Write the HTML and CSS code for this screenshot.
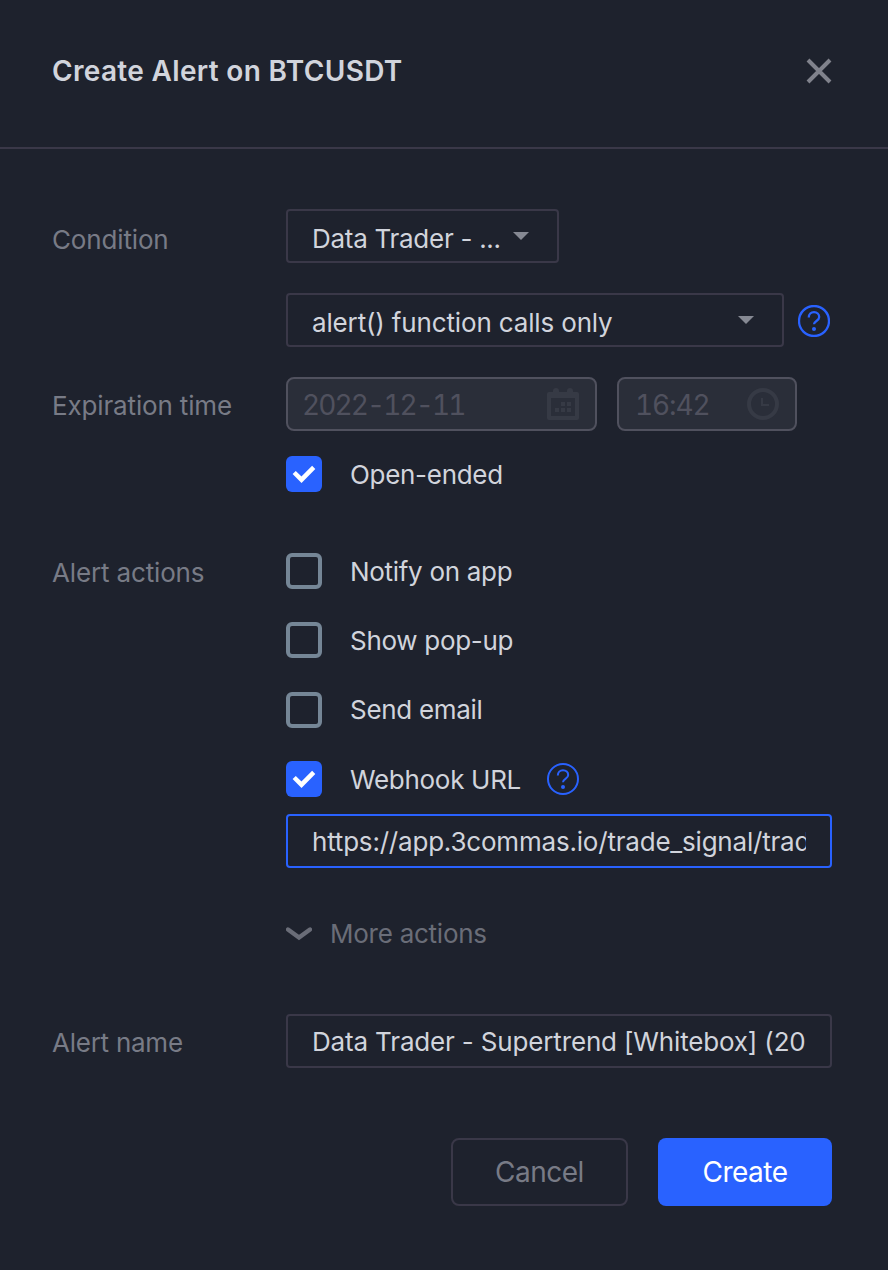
FILE: index.html
```html
<!DOCTYPE html>
<html lang="en">
<head>
  <meta charset="UTF-8">
  <meta name="viewport" content="width=device-width, initial-scale=1.0">
  <title>Create Alert on BTCUSDT</title>
  <link rel="stylesheet" href="styles.css">
</head>
<body>
  <div class="dialog">
    <header>
      <h1>Create Alert on BTCUSDT</h1>
      <button type="button" class="close-btn" aria-label="Close">
        <svg width="26" height="26" viewBox="0 0 26 26"><path d="M2 2l22 22M24 2L2 24"/></svg>
      </button>
    </header>

    <form>
      <div class="row condition">
        <span class="label">Condition</span>
        <div class="fields">
          <div class="select select-small">
            <span>Data Trader - ...</span>
            <svg class="arrow" width="16" height="8" viewBox="0 0 16 8"><path d="M0 0h16L8 8z"/></svg>
          </div>
          <div class="line">
            <div class="select select-wide">
              <span>alert() function calls only</span>
              <svg class="arrow" width="16" height="8" viewBox="0 0 16 8"><path d="M0 0h16L8 8z"/></svg>
            </div>
            <svg class="help" width="32" height="32" viewBox="0 0 32 32"><circle cx="16" cy="16" r="15"/><path d="M10.8 12.5c0-3.2 2.2-5.3 5.2-5.3s5.2 2.1 5.2 4.8c0 4-5.2 3.8-5.2 7.3"/><circle class="dot" cx="16" cy="24" r="2"/></svg>
          </div>
        </div>
      </div>

      <div class="row expiration">
        <span class="label">Expiration time</span>
        <div class="fields">
          <div class="line dates">
            <div class="disabled date">
              <span>2022-12-11</span>
              <svg width="32" height="32" viewBox="0 0 32 32"><path fill-rule="evenodd" d="M2 4h4V3a3 3 0 0 1 6 0v1h8V3a3 3 0 0 1 6 0v1h4a2 2 0 0 1 2 2v24a2 2 0 0 1-2 2H2a2 2 0 0 1-2-2V6a2 2 0 0 1 2-2zM4 10v18h24V10z"/><path d="M14 14h4v4h-4zM20 14h4v4h-4zM8 20h4v4H8zM14 20h4v4h-4zM20 20h4v4h-4z"/></svg>
            </div>
            <div class="disabled time">
              <span>16:42</span>
              <svg width="32" height="32" viewBox="0 0 32 32"><path fill-rule="evenodd" d="M16 0a16 16 0 1 1 0 32a16 16 0 1 1 0-32zM16 4a12 12 0 1 0 0 24a12 12 0 1 0 0-24zM14 10h2v6h6v2h-8z"/></svg>
            </div>
          </div>
          <div class="check">
            <span class="box checked"><svg width="24" height="18" viewBox="0 0 24 18"><path d="M2.2 7.5l7.3 7.2L21.7 2.4"/></svg></span>
            <span class="check-text">Open-ended</span>
          </div>
        </div>
      </div>

      <div class="row actions">
        <span class="label">Alert actions</span>
        <div class="fields">
          <div class="check"><span class="box"></span><span class="check-text">Notify on app</span></div>
          <div class="check"><span class="box"></span><span class="check-text">Show pop-up</span></div>
          <div class="check"><span class="box"></span><span class="check-text">Send email</span></div>
          <div class="check">
            <span class="box checked"><svg width="24" height="18" viewBox="0 0 24 18"><path d="M2.2 7.5l7.3 7.2L21.7 2.4"/></svg></span>
            <span class="check-text">Webhook URL</span>
            <svg class="help thin" width="32" height="32" viewBox="0 0 32 32"><circle cx="16" cy="16" r="15"/><path d="M10.8 12.5c0-3.2 2.2-5.3 5.2-5.3s5.2 2.1 5.2 4.8c0 4-5.2 3.8-5.2 7.3"/><circle class="dot" cx="16" cy="24" r="2"/></svg>
          </div>
          <div class="input focused"><span>https://app.3commas.io/trade_signal/trad</span></div>
          <div class="more">
            <svg width="26" height="14" viewBox="0 0 26 14"><path d="M2 2.5l11 8L24 2.5"/></svg>
            <span>More actions</span>
          </div>
        </div>
      </div>

      <div class="row name">
        <span class="label">Alert name</span>
        <div class="fields">
          <div class="input"><span>Data Trader - Supertrend [Whitebox] (20</span></div>
        </div>
      </div>

      <div class="buttons">
        <button type="button" class="btn cancel">Cancel</button>
        <button type="button" class="btn create">Create</button>
      </div>
    </form>
  </div>
</body>
</html>
```
FILE: styles.css
```css
* {
  box-sizing: border-box;
}
body {
  margin: 0;
  background-color: #1e222d;
  color: #d1d4dc;
  font-family: Inter, sans-serif;
  font-size: 26px;
  line-height: 32px;
  letter-spacing: -0.15px;
}
.dialog {
  height: 1270px;
  overflow: hidden;
}
svg {
  display: block;
  flex: none;
}
header {
  display: flex;
  justify-content: space-between;
  height: 149px;
  padding: 55px 56px 0 52px;
  border-bottom: 2px solid #3a3848;
}
h1 {
  margin: 0;
  font-size: 28px;
  font-weight: 600;
  line-height: 32px;
  letter-spacing: 0.33px;
}
.close-btn {
  height: 26px;
  margin-top: 3px;
  padding: 0;
  border: none;
  background: none;
}
.close-btn path {
  fill: none;
  stroke: #80828c;
  stroke-width: 4;
}
form {
  padding: 60px 56px 0 52px;
}
.row {
  display: flex;
}
.label {
  width: 234px;
  padding-top: 15px;
  color: #787b86;
  white-space: nowrap;
}
.fields {
  width: 546px;
}
.line {
  display: flex;
  align-items: center;
}
.select {
  display: flex;
  align-items: center;
  justify-content: space-between;
  height: 54px;
  padding: 5px 28px 0 24px;
  border: 2px solid #3a3848;
  border-radius: 4px;
  white-space: nowrap;
}
.select-small {
  width: 273px;
  margin-bottom: 30px;
  letter-spacing: -0.28px;
}
.select-wide {
  width: 498px;
}
.arrow {
  margin-bottom: 5px;
  fill: #868993;
}
.help {
  margin-top: 2px;
  margin-left: 14px;
  fill: none;
  stroke: #2962ff;
  stroke-width: 2.3;
}
.help.thin {
  margin-top: 0;
  margin-left: 26px;
  stroke-width: 2;
}
.help .dot {
  fill: #2962ff;
  stroke: none;
}
.expiration {
  margin-top: 30px;
}
.expiration .label,
.name .label {
  padding-top: 13px;
}
.dates {
  gap: 20px;
  margin-bottom: 25px;
}
.disabled {
  display: flex;
  align-items: center;
  justify-content: space-between;
  height: 54px;
  padding: 0 16px 0 14px;
  border: 2px solid #50515e;
  border-radius: 8px;
  background-color: #2a2e39;
  color: #50515e;
  fill: #363a45;
  font-size: 28px;
  font-variant-numeric: tabular-nums;
}
.disabled span {
  padding-top: 2px;
}
.date {
  width: 311px;
  letter-spacing: -1.9px;
}
.time {
  width: 180px;
  padding-left: 16px;
  letter-spacing: -1.1px;
}
.check {
  display: flex;
  align-items: center;
  height: 36px;
  letter-spacing: -0.3px;
}
.check-text {
  padding-top: 1px;
}
.box {
  display: flex;
  align-items: center;
  justify-content: center;
  width: 36px;
  height: 36px;
  margin-right: 28px;
  border: 4px solid #758696;
  border-radius: 6px;
}
.box.checked {
  border: none;
  background-color: #2962ff;
}
.box path {
  fill: none;
  stroke: #fff;
  stroke-width: 4.5;
}
.actions {
  margin-top: 61px;
}
.actions .label {
  padding-top: 4px;
}
.actions .check {
  margin-bottom: 33.4px;
}
.input {
  height: 54px;
  padding: 10px 24px;
  border: 2px solid #3a3848;
  border-radius: 4px;
}
.input span {
  display: block;
  overflow: hidden;
  white-space: nowrap;
}
.input.focused {
  margin-top: -17px;
  border-color: #2962ff;
  letter-spacing: -0.2px;
}
.more {
  display: flex;
  align-items: center;
  height: 32px;
  margin-top: 50px;
  gap: 18px;
  color: #6a6d78;
  letter-spacing: -0.25px;
}
.more path {
  fill: none;
  stroke: #6a6d78;
  stroke-width: 4.4;
  stroke-linecap: round;
}
.name {
  margin-top: 64px;
}
.name .label {
  letter-spacing: -0.25px;
}
.name .input {
  letter-spacing: -0.16px;
}
.buttons {
  display: flex;
  justify-content: flex-end;
  gap: 30px;
  margin-top: 70px;
}
.btn {
  height: 68px;
  padding: 0;
  border: none;
  border-radius: 8px;
  font-family: inherit;
  font-size: 28px;
  letter-spacing: -0.5px;
}
.cancel {
  width: 177px;
  border: 2px solid #3a3848;
  background: none;
  color: #787b86;
}
.create {
  width: 174px;
  background-color: #2962ff;
  color: #fff;
}
```
